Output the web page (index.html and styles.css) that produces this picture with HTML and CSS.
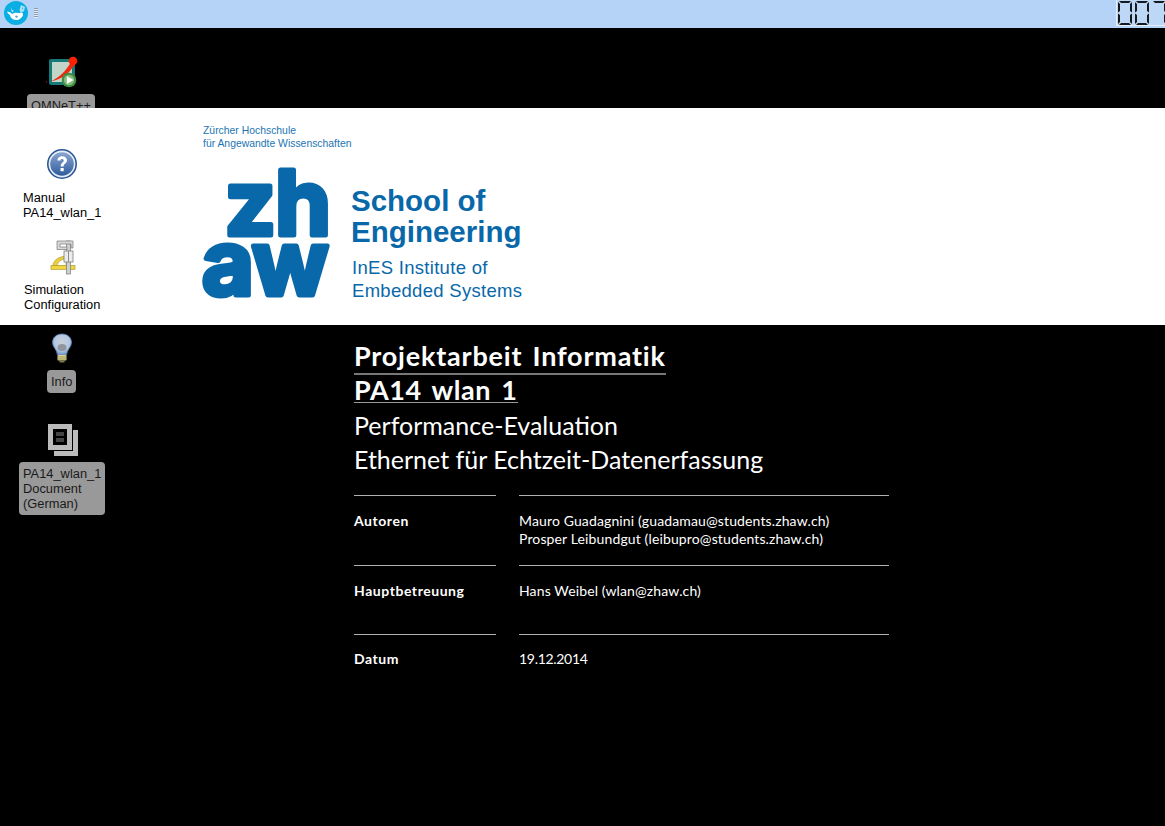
FILE: index.html
```html
<!DOCTYPE html>
<html lang="de">
<head>
<meta charset="utf-8">
<title>PA14 wlan 1</title>
<link rel="stylesheet" href="styles.css">
</head>
<body>
<header class="panel">
  <svg class="panel-logo" viewBox="0 0 24 24" aria-hidden="true">
    <circle cx="12" cy="12" r="12" fill="#0aaee2"/>
    <path d="M3 11 C5 10 7 12 8 13 C11 11 14 12 16 12 C18 11 19 12 19 14 C18 17 15 19.500 11 19 C8 18.500 6 16 6 14 C5 13.500 4 12.500 3 11 Z" fill="#fff"/>
    <path d="M6.500 6 L8 9 L10 10 L8 11 Z" fill="#e8f7fc"/>
    <path d="M17 4 L21 6 L20 10 L17 12 L15.500 9 Z" fill="#a9e1f5"/>
    <path d="M11 15 L13 14.500 L14 16 L12 17 Z M18 6 L19 7.500 L18 9 Z" fill="#4aa9cb"/>
  </svg>
  <div class="panel-handle"></div>
  <div class="lcd" aria-label="007">
    <svg class="lcd-digit" viewBox="0 0 14 24"><path d="M1 0H13L11 2H3ZM0 1L2 3V10L0 11.500ZM14 1L12 3V10L14 11.500ZM0 12.500L2 14V21L0 23ZM14 12.500L12 14V21L14 23ZM1 24L3 22H11L13 24Z"/></svg>
    <svg class="lcd-digit" viewBox="0 0 14 24"><path d="M1 0H13L11 2H3ZM0 1L2 3V10L0 11.500ZM14 1L12 3V10L14 11.500ZM0 12.500L2 14V21L0 23ZM14 12.500L12 14V21L14 23ZM1 24L3 22H11L13 24Z"/></svg>
    <svg class="lcd-digit" viewBox="0 0 14 24"><path d="M1 0H13L11 2H3ZM14 1L12 3V10L14 11.500ZM14 12.500L12 14V21L14 23Z"/></svg>
  </div>
</header>

<main class="desktop">
  <a class="icon icon-omnet">
    <svg class="glyph glyph-omnet" viewBox="0 0 34 34" aria-hidden="true">
      <circle cx="-.5" cy="26" r=".7" fill="#8a2010"/>
      <rect x="2" y="3" width="26" height="26" rx="2" fill="#157a78"/>
      <rect x="5" y="6" width="20" height="20" fill="#c3d4c8"/>
      <path d="M4 25 C12 22 19 15 24 6 L28 8 C22 18 14 24 4 25 Z" fill="#ee2a10"/>
      <circle cx="26" cy="5" r="4.300" fill="#fb2100"/>
      <circle cx="22" cy="24" r="7.300" fill="#3f8c44"/>
      <circle cx="22" cy="24" r="5.200" fill="#83bd78"/>
      <path d="M19.800 20 L26.500 24 L19.800 28 Z" fill="#fff"/>
    </svg>
    <span class="label label-dark">OMNeT++</span>
  </a>

  <section class="banner">
    <div class="logo">
      <p class="logo-school">Zürcher Hochschule<br>für Angewandte Wissenschaften</p>
      <div class="logo-main">
        <svg class="logo-mark" viewBox="0 0 130 135" aria-label="zhaw">
          <text x="127" y="67.500" text-anchor="end" class="mark-text mark-zh">zh</text>
          <text x="123.500" y="127.500" text-anchor="end" class="mark-text mark-aw">aw</text>
        </svg>
        <div class="logo-text">
          <p class="logo-eng">School of<br>Engineering</p>
          <p class="logo-inst">InES Institute of<br>Embedded Systems</p>
        </div>
      </div>
    </div>
  </section>

  <a class="icon icon-manual">
    <svg class="glyph glyph-help" viewBox="0 0 32 32" aria-hidden="true">
      <defs><linearGradient id="helpfill" x1="0" y1="0" x2="0" y2="1"><stop offset="0" stop-color="#8aa6cf"/><stop offset="1" stop-color="#2f5c9e"/></linearGradient></defs>
      <circle cx="16" cy="16" r="15" fill="#2a5698"/>
      <circle cx="16" cy="16" r="13.400" fill="#e9eef6"/>
      <circle cx="16" cy="16" r="11.800" fill="url(#helpfill)"/>
      <path d="M11.500 12.500 C11.500 9.500 14 8.300 16.200 8.300 C19 8.300 21 10 21 12.300 C21 15.500 17.600 15.600 17.600 18.600 L14.600 18.600 C14.600 14.600 17.800 14.600 17.800 12.500 C17.800 11.400 17 10.900 16 10.900 C15 10.900 14.400 11.600 14.400 12.500 Z" fill="#fff"/>
      <rect x="14.500" y="20" width="3.200" height="3.200" fill="#fff"/>
    </svg>
    <span class="label">Manual<br>PA14_wlan_1</span>
  </a>

  <a class="icon icon-sim">
    <svg class="glyph glyph-sim" viewBox="0 0 28 38" aria-hidden="true">
      <path d="M4 27 C4 21 10 17 19 17 L19 27 Z M8 27 H17 V20 C12 20 8.500 23 8 27 Z" fill="#e8cf3c" stroke="#a6932a" stroke-width=".6" fill-rule="evenodd"/>
      <rect x="2" y="26.500" width="24" height="4" fill="#efd640" stroke="#a6932a" stroke-width=".6"/>
      <rect x="17.500" y="2" width="4" height="33" fill="#cfcfcf" stroke="#7a7a7a" stroke-width=".7"/>
      <path d="M8 2 H24 V9 H22 V5 H11 V8 H18 V10.500 H8 Z" fill="#d8d8d8" stroke="#7a7a7a" stroke-width=".7"/>
      <rect x="15" y="12" width="9" height="11" fill="#ececec" stroke="#6d6d6d" stroke-width=".7"/>
      <path d="M19.500 12 V23" stroke="#8a8a8a" stroke-width="1"/>
    </svg>
    <span class="label">Simulation<br>Configuration</span>
  </a>

  <a class="icon icon-info">
    <svg class="glyph glyph-bulb" viewBox="0 0 20 30" aria-hidden="true">
      <defs><radialGradient id="bulbfill" cx=".5" cy=".4" r=".6"><stop offset="0" stop-color="#c9cfd6"/><stop offset=".65" stop-color="#b4c8e4"/><stop offset="1" stop-color="#6f94c8"/></radialGradient></defs>
      <path d="M10 1 C15.500 1 19.500 4.500 19.500 9.500 C19.500 14 15 16.500 14.500 22 L5.500 22 C5 16.500 .5 14 .5 9.500 C.5 4.500 4.500 1 10 1 Z" fill="url(#bulbfill)" stroke="#6485b4" stroke-width=".8"/>
      <ellipse cx="10" cy="14.500" rx="4.500" ry="3.500" fill="#8f969c"/>
      <rect x="5.500" y="22" width="9" height="5.500" rx="1" fill="#dcd48e"/>
      <path d="M5.500 24 H14.500 M5.500 26 H14.500" stroke="#85834e" stroke-width=".7"/>
      <rect x="7.500" y="27.500" width="5" height="2" fill="#77774a"/>
    </svg>
    <span class="label label-dark">Info</span>
  </a>

  <a class="icon icon-doc">
    <div class="glyph-doc" aria-hidden="true"><div class="doc-back"></div><div class="doc-front"><i></i><i></i></div></div>
    <span class="label label-dark label-left">PA14_wlan_1<br>Document<br>(German)</span>
  </a>

  <article class="title-page">
    <h1 class="project"><span class="project-a">Projektarbeit Informatik</span><span class="project-b">PA14 wlan 1</span></h1>
    <p class="subject">Performance-Evaluation<br>Ethernet für Echtzeit-Datenerfassung</p>
    <div class="facts">
      <div class="fact fact-a">
        <strong>Autoren</strong>
        <div>Mauro Guadagnini (guadamau@students.zhaw.ch)<br>Prosper Leibundgut (leibupro@students.zhaw.ch)</div>
      </div>
      <div class="fact fact-b">
        <strong>Hauptbetreuung</strong>
        <div>Hans Weibel (wlan@zhaw.ch)</div>
      </div>
      <div class="fact fact-c">
        <strong>Datum</strong>
        <div class="date">19.12.2014</div>
      </div>
    </div>
  </article>
</main>
</body>
</html>
```
FILE: styles.css
```css
* { box-sizing: border-box; }
html, body { margin: 0; height: 100%; }
body {
  background: #000;
  font-family: "Liberation Sans", sans-serif;
  overflow: hidden;
  color: #fff;
}
p, h1 { margin: 0; }

.panel {
  height: 28px;
  background: #b5d3f6;
  display: flex;
  align-items: flex-start;
  padding: 1px 0 0 4px;
}
.panel-logo { width: 24px; height: 24px; display: block; }
.panel-handle {
  width: 4px; height: 10px;
  margin: 7px 0 0 6px;
  background: repeating-linear-gradient(#8c9aa8 0 1px, #e6edf5 1px 2px);
}
.lcd {
  margin: -1px 0 0 auto;
  width: 49px; height: 26px;
  background: #bdd7f7;
  border-left: 1px solid #e8eef5;
  border-bottom: 1px solid #e8eef5;
  display: flex;
  gap: 3px;
  padding: 1px 0 0 1px;
}
.lcd-digit { width: 14px; height: 24px; display: block; flex: none; }
.lcd-digit path { fill: #16191d; }

.desktop { position: relative; height: 798px; padding-top: 80px; }

.banner {
  position: relative;
  z-index: 1;
  height: 217px;
  background: #fff;
  padding: 16px 0 0 203px;
}
.logo { color: #0868a9; }
.logo-school { font-size: 10.400px; line-height: 13px; color: #1c75b2; }
.logo-main { display: flex; margin-top: 17px; }
.logo-mark { width: 130px; height: 135px; display: block; flex: none; overflow: visible; }
.mark-text {
  font-family: "Inter", sans-serif;
  font-weight: 700;
  font-size: 90px;
  fill: #0868a9;
  stroke: #0868a9;
  stroke-width: 5px;
  stroke-linejoin: round;
}
.mark-zh { letter-spacing: -1px; }
.mark-aw { letter-spacing: -2px; }
.logo-text { margin-left: 18px; padding-top: 19px; }
.logo-eng { font-size: 29.500px; font-weight: 700; line-height: 30.500px; }
.logo-inst { margin-top: 9px; font-size: 18.500px; line-height: 23px; padding-left: 1px; letter-spacing: .3px; }

.icon { position: absolute; left: 0; top: 0; z-index: 2; color: #000; font-size: 12.850px; line-height: 15px; display: block; }
.glyph { display: block; position: absolute; }
.label { position: absolute; white-space: nowrap; }
.label-dark { background: #999; border-radius: 4px; padding: 4px; color: #1a1a1a; }
.label-left { text-align: left; }

.icon-omnet { z-index: 0; }
.glyph-omnet { left: 47px; top: 28px; width: 34px; height: 34px; overflow: visible; }
.icon-omnet .label { left: 27px; top: 66px; }

.glyph-help { left: 46px; top: 120px; width: 32px; height: 32px; }
.icon-manual .label { left: 23px; top: 162px; }

.glyph-sim { left: 49px; top: 211px; width: 28px; height: 38px; }
.icon-sim .label { left: 24px; top: 254px; }

.glyph-bulb { left: 52px; top: 305px; width: 20px; height: 30px; }
.icon-info .label { left: 47px; top: 342px; }

.glyph-doc { position: absolute; left: 48px; top: 396px; width: 30px; height: 32px; }
.doc-back { position: absolute; right: 0; bottom: 0; width: 24px; height: 26px; border: solid #bbb; border-width: 0 5px 5px 0; }
.doc-front {
  position: absolute; left: 0; top: 0;
  width: 24px; height: 26px;
  border: 5px solid #bbb;
  background: #000;
  display: flex; flex-direction: column; align-items: center; gap: 2px;
  padding-top: 3px;
}
.doc-front i { display: block; width: 8px; height: 4px; background: #444; }
.icon-doc .label { left: 19px; top: 434px; }

.title-page {
  margin-left: 354px;
  width: 535px;
  padding-top: 13px;
  font-family: "Lato", sans-serif;
  color: #fff;
}
.project {
  display: flex; flex-direction: column; align-items: flex-start;
  font-size: 27px; font-weight: 700;
  letter-spacing: .8px; word-spacing: 3px;
}
.project-a { line-height: 35px; border-bottom: 2px solid #777; }
.project-b { line-height: 29px; height: 28px; border-bottom: 1px solid #999; letter-spacing: .6px; }
.subject { margin-top: 5px; font-size: 25px; line-height: 34px; font-weight: 400; }
.facts { margin-top: 19px; font-size: 14px; line-height: 18px; }
.fact {
  display: grid;
  grid-template-columns: 142px 370px;
  column-gap: 23px;
  padding-top: 17px;
  position: relative;
  letter-spacing: .13px;
}
.fact::before, .fact::after {
  content: "";
  position: absolute; top: 0; height: 1px; background: #b0b0b0;
}
.fact::before { left: 0; width: 142px; }
.fact::after { left: 165px; width: 370px; }
.fact-a { height: 70px; }
.fact-b { height: 69px; }
.fact-c { height: 50px; padding-top: 16px; }
.fact strong { font-weight: 700; letter-spacing: .55px; }
.date { letter-spacing: -.3px; }
```
